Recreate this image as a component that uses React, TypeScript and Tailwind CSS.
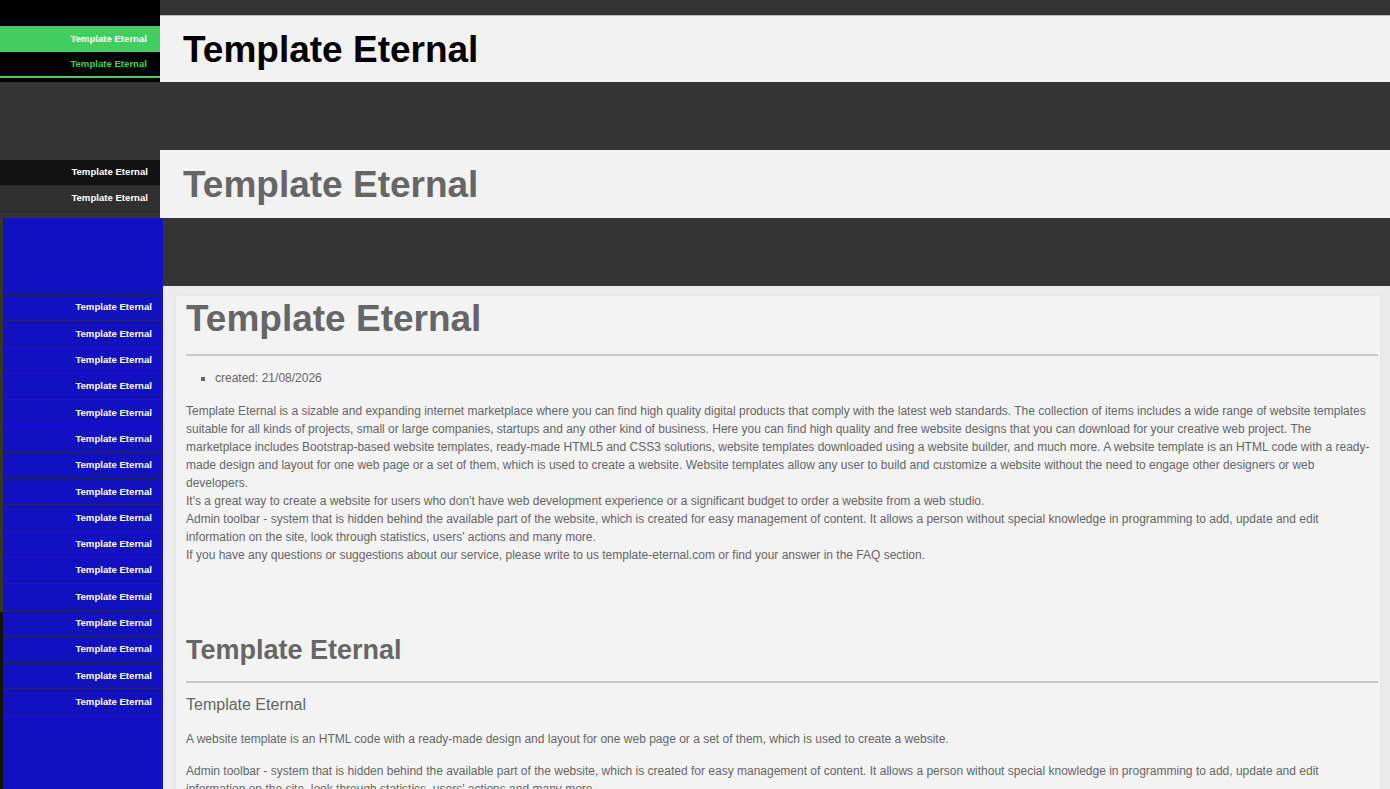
import React from "react";

const font = { fontFamily: '"Liberation Sans", Arial, sans-serif' };

export default function App() {
  const blueItems = Array.from({ length: 16 }, (_, i) => i);

  return (
    <div className="w-[1390px] h-[789px] overflow-hidden bg-[#333333]" style={font}>
      {/* Section 1 - black / green */}
      <div className="flex h-[82px]">
        <div className="w-[160px] bg-black flex flex-col">
          <div className="h-[26px]" />
          <a className="h-[26px] bg-[#3ecf5c] text-white text-[9.6px] font-bold flex items-center justify-end pr-[13px]">
            Template Eternal
          </a>
          <a className="h-[26px] text-[#3ecf5c] text-[9.6px] font-bold flex items-center justify-end pr-[13px] border-b-2 border-[#3ecf5c]">
            Template Eternal
          </a>
        </div>
        <div className="flex-1 flex flex-col">
          <div className="h-[15px] bg-[#333333]" />
          <div className="flex-1 bg-[#f2f2f2] border-t border-[#bdbdbd] flex items-center pl-[23px]">
            <h1 className="text-[37px] font-bold text-black leading-none">Template Eternal</h1>
          </div>
        </div>
      </div>

      {/* Section 2 - dark */}
      <div className="h-[68px] bg-[#333333]" />
      <div className="flex h-[68px]">
        <div className="w-[160px] bg-[#333333] flex flex-col">
          <div className="h-[10px]" />
          <a className="h-[26px] bg-[#111111] border-b border-[#2a2a2a] text-white text-[9.6px] font-bold flex items-center justify-end pr-[12px]">
            Template Eternal
          </a>
          <a className="h-[26px] bg-[#303030] border-b border-[#262626] text-white text-[9.6px] font-bold flex items-center justify-end pr-[12px]">
            Template Eternal
          </a>
        </div>
        <div className="flex-1 bg-[#f2f2f2] flex items-center pl-[23px]">
          <h1 className="text-[37px] font-bold text-[#666666] leading-none">Template Eternal</h1>
        </div>
      </div>

      {/* Section 3 - blue */}
      <div className="flex h-[571px]">
        <div className="w-[3px] flex flex-col">
          <div className="h-[394px] bg-[#333333]" />
          <div className="flex-1 bg-[#111111]" />
        </div>
        <div className="w-[160px] bg-[#1111bf] flex flex-col">
          <div className="h-[77px] shrink-0 border-b border-[#23236b]" />
          {blueItems.map((i) => (
            <a
              key={i}
              className="h-[26.3px] shrink-0 border-b border-[#23236b] text-white text-[9.6px] font-bold flex items-center justify-end pr-[11px]"
            >
              Template Eternal
            </a>
          ))}
        </div>
        <div className="flex-1 flex flex-col min-h-0">
          <div className="h-[68px] shrink-0 bg-[#333333] border-b border-[#3c3c3c]" />
          <div className="flex-1 bg-[#ececec] pl-[13px] pr-[10px] pt-[10px]">
            <div className="bg-[#f3f3f3] h-full pl-[10px] pr-[2px] text-[#666666] shadow-[0_0_6px_rgba(0,0,0,0.05)]">
              <h1 className="text-[37px] font-bold leading-[43px] pt-px">Template Eternal</h1>
              <hr className="mt-[14px] border-0 border-t-2 border-[#c8c8c8]" />
              <ul className="mt-[13px] pl-[29px] list-[square] text-[12px] leading-[18px]">
                <li>created: 21/08/2026</li>
              </ul>
              <p className="mt-[15px] text-[12px] leading-[18px]">
                Template Eternal is a sizable and expanding internet marketplace where you can find high quality digital products that comply with the latest web standards. The collection of items includes a wide range of website templates suitable for all kinds of projects, small or large companies, startups and any other kind of business. Here you can find high quality and free website designs that you can download for your creative web project. The marketplace includes Bootstrap-based website templates, ready-made HTML5 and CSS3 solutions, website templates downloaded using a website builder, and much more. A website template is an HTML code with a ready-made design and layout for one web page or a set of them, which is used to create a website. Website templates allow any user to build and customize a website without the need to engage other designers or web developers.
                <br />
                It's a great way to create a website for users who don't have web development experience or a significant budget to order a website from a web studio.
                <br />
                Admin toolbar - system that is hidden behind the available part of the website, which is created for easy management of content. It allows a person without special knowledge in programming to add, update and edit information on the site, look through statistics, users' actions and many more.
                <br />
                If you have any questions or suggestions about our service, please write to us template-eternal.com or find your answer in the FAQ section.
              </p>
              <h2 className="mt-[70px] text-[27px] font-bold leading-[32px]">Template Eternal</h2>
              <hr className="mt-[15px] border-0 border-t-2 border-[#c8c8c8]" />
              <h3 className="mt-[12px] text-[16px] leading-[20px]">Template Eternal</h3>
              <p className="mt-[15px] text-[12px] leading-[18px]">
                A website template is an HTML code with a ready-made design and layout for one web page or a set of them, which is used to create a website.
              </p>
              <p className="mt-[14px] text-[12px] leading-[18px]">
                Admin toolbar - system that is hidden behind the available part of the website, which is created for easy management of content. It allows a person without special knowledge in programming to add, update and edit information on the site, look through statistics, users' actions and many more.
              </p>
            </div>
          </div>
        </div>
      </div>
    </div>
  );
}
